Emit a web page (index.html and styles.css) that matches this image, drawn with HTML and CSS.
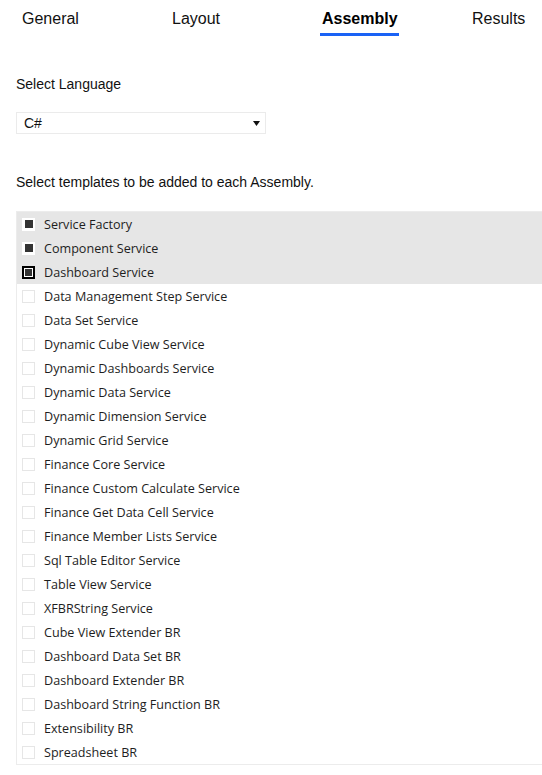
FILE: index.html
```html
<!DOCTYPE html>
<html lang="en">
<head>
<meta charset="utf-8">
<title>Assembly</title>
<link rel="stylesheet" href="styles.css">
</head>
<body>
<nav class="tabs">
  <div class="tab"><span class="tab-label">General</span></div>
  <div class="tab"><span class="tab-label">Layout</span></div>
  <div class="tab"><span class="tab-label active">Assembly</span></div>
  <div class="tab tab-last"><span class="tab-label">Results</span></div>
</nav>

<section class="panel">
  <div class="field-label">Select Language</div>
  <div class="select">
    <span class="select-value">C#</span>
    <svg class="select-arrow" width="7" height="5" viewBox="0 0 7 5"><path d="M0 0H7L3.5 5Z" fill="#111"/></svg>
  </div>

  <div class="field-label templates-label">Select templates to be added to each Assembly.</div>

  <div class="list">
    <div class="item selected"><span class="check checked"></span><span class="item-text">Service Factory</span></div>
    <div class="item selected"><span class="check checked"></span><span class="item-text">Component Service</span></div>
    <div class="item selected"><span class="check checked focus"></span><span class="item-text">Dashboard Service</span></div>
    <div class="item"><span class="check"></span><span class="item-text">Data Management Step Service</span></div>
    <div class="item"><span class="check"></span><span class="item-text">Data Set Service</span></div>
    <div class="item"><span class="check"></span><span class="item-text">Dynamic Cube View Service</span></div>
    <div class="item"><span class="check"></span><span class="item-text">Dynamic Dashboards Service</span></div>
    <div class="item"><span class="check"></span><span class="item-text">Dynamic Data Service</span></div>
    <div class="item"><span class="check"></span><span class="item-text">Dynamic Dimension Service</span></div>
    <div class="item"><span class="check"></span><span class="item-text">Dynamic Grid Service</span></div>
    <div class="item"><span class="check"></span><span class="item-text">Finance Core Service</span></div>
    <div class="item"><span class="check"></span><span class="item-text">Finance Custom Calculate Service</span></div>
    <div class="item"><span class="check"></span><span class="item-text">Finance Get Data Cell Service</span></div>
    <div class="item"><span class="check"></span><span class="item-text">Finance Member Lists Service</span></div>
    <div class="item"><span class="check"></span><span class="item-text">Sql Table Editor Service</span></div>
    <div class="item"><span class="check"></span><span class="item-text">Table View Service</span></div>
    <div class="item"><span class="check"></span><span class="item-text">XFBRString Service</span></div>
    <div class="item"><span class="check"></span><span class="item-text">Cube View Extender BR</span></div>
    <div class="item"><span class="check"></span><span class="item-text">Dashboard Data Set BR</span></div>
    <div class="item"><span class="check"></span><span class="item-text">Dashboard Extender BR</span></div>
    <div class="item"><span class="check"></span><span class="item-text">Dashboard String Function BR</span></div>
    <div class="item"><span class="check"></span><span class="item-text">Extensibility BR</span></div>
    <div class="item"><span class="check"></span><span class="item-text">Spreadsheet BR</span></div>
  </div>
</section>
</body>
</html>
```

FILE: styles.css
```css
html, body {
  margin: 0;
  padding: 0;
  background: #fff;
}

body {
  font-family: "Liberation Sans", Arial, sans-serif;
  color: #111;
  overflow: hidden;
}

.tabs {
  display: flex;
  padding: 10px 0 0 16px;
}

.tab {
  flex: none;
  width: 150px;
  padding-left: 6px;
  box-sizing: border-box;
}

.tab.tab-last {
  flex: 1 1 auto;
  width: auto;
}

.tab-label {
  display: inline-block;
  font-size: 16px;
  line-height: 18px;
  padding: 0 0 5px 0;
  border-bottom: 3px solid transparent;
  color: #111;
}

.tab-label.active {
  font-weight: bold;
  color: #000;
  padding: 0 1px 5px 2px;
  margin-left: -2px;
  border-bottom-color: #1a62f5;
}

.panel {
  padding: 40px 0 0 16px;
}

.field-label {
  font-size: 14px;
  line-height: 16px;
  color: #111;
}

.select {
  margin-top: 20px;
  width: 250px;
  height: 22px;
  box-sizing: border-box;
  border: 1px solid #ebebeb;
  display: flex;
  align-items: center;
  justify-content: space-between;
  padding: 0 5px 0 7px;
}

.select-value {
  font-size: 14px;
  color: #111;
}

.select-arrow {
  display: block;
}

.templates-label {
  margin-top: 40px;
}

.list {
  margin-top: 21px;
  border: 1px solid #ececec;
  border-right: none;
}

.item {
  height: 24px;
  display: flex;
  align-items: center;
  padding-left: 5px;
  font-family: "Open Sans", "Noto Sans", sans-serif;
  font-size: 12.6px;
  color: #1e1e1e;
}

.item.selected {
  background: #e6e6e6;
}

.check {
  width: 13px;
  height: 13px;
  box-sizing: border-box;
  border: 1px solid #e6e6e6;
  background: #fff;
  margin-right: 9px;
  display: flex;
  align-items: center;
  justify-content: center;
  flex: none;
}

.check.checked {
  border-color: #fff;
}

.check.checked::after {
  content: "";
  width: 8px;
  height: 8px;
  background: #333;
}

.check.focus {
  border: 2px solid #000;
}

.check.focus::after {
  width: 7px;
  height: 7px;
}
```
